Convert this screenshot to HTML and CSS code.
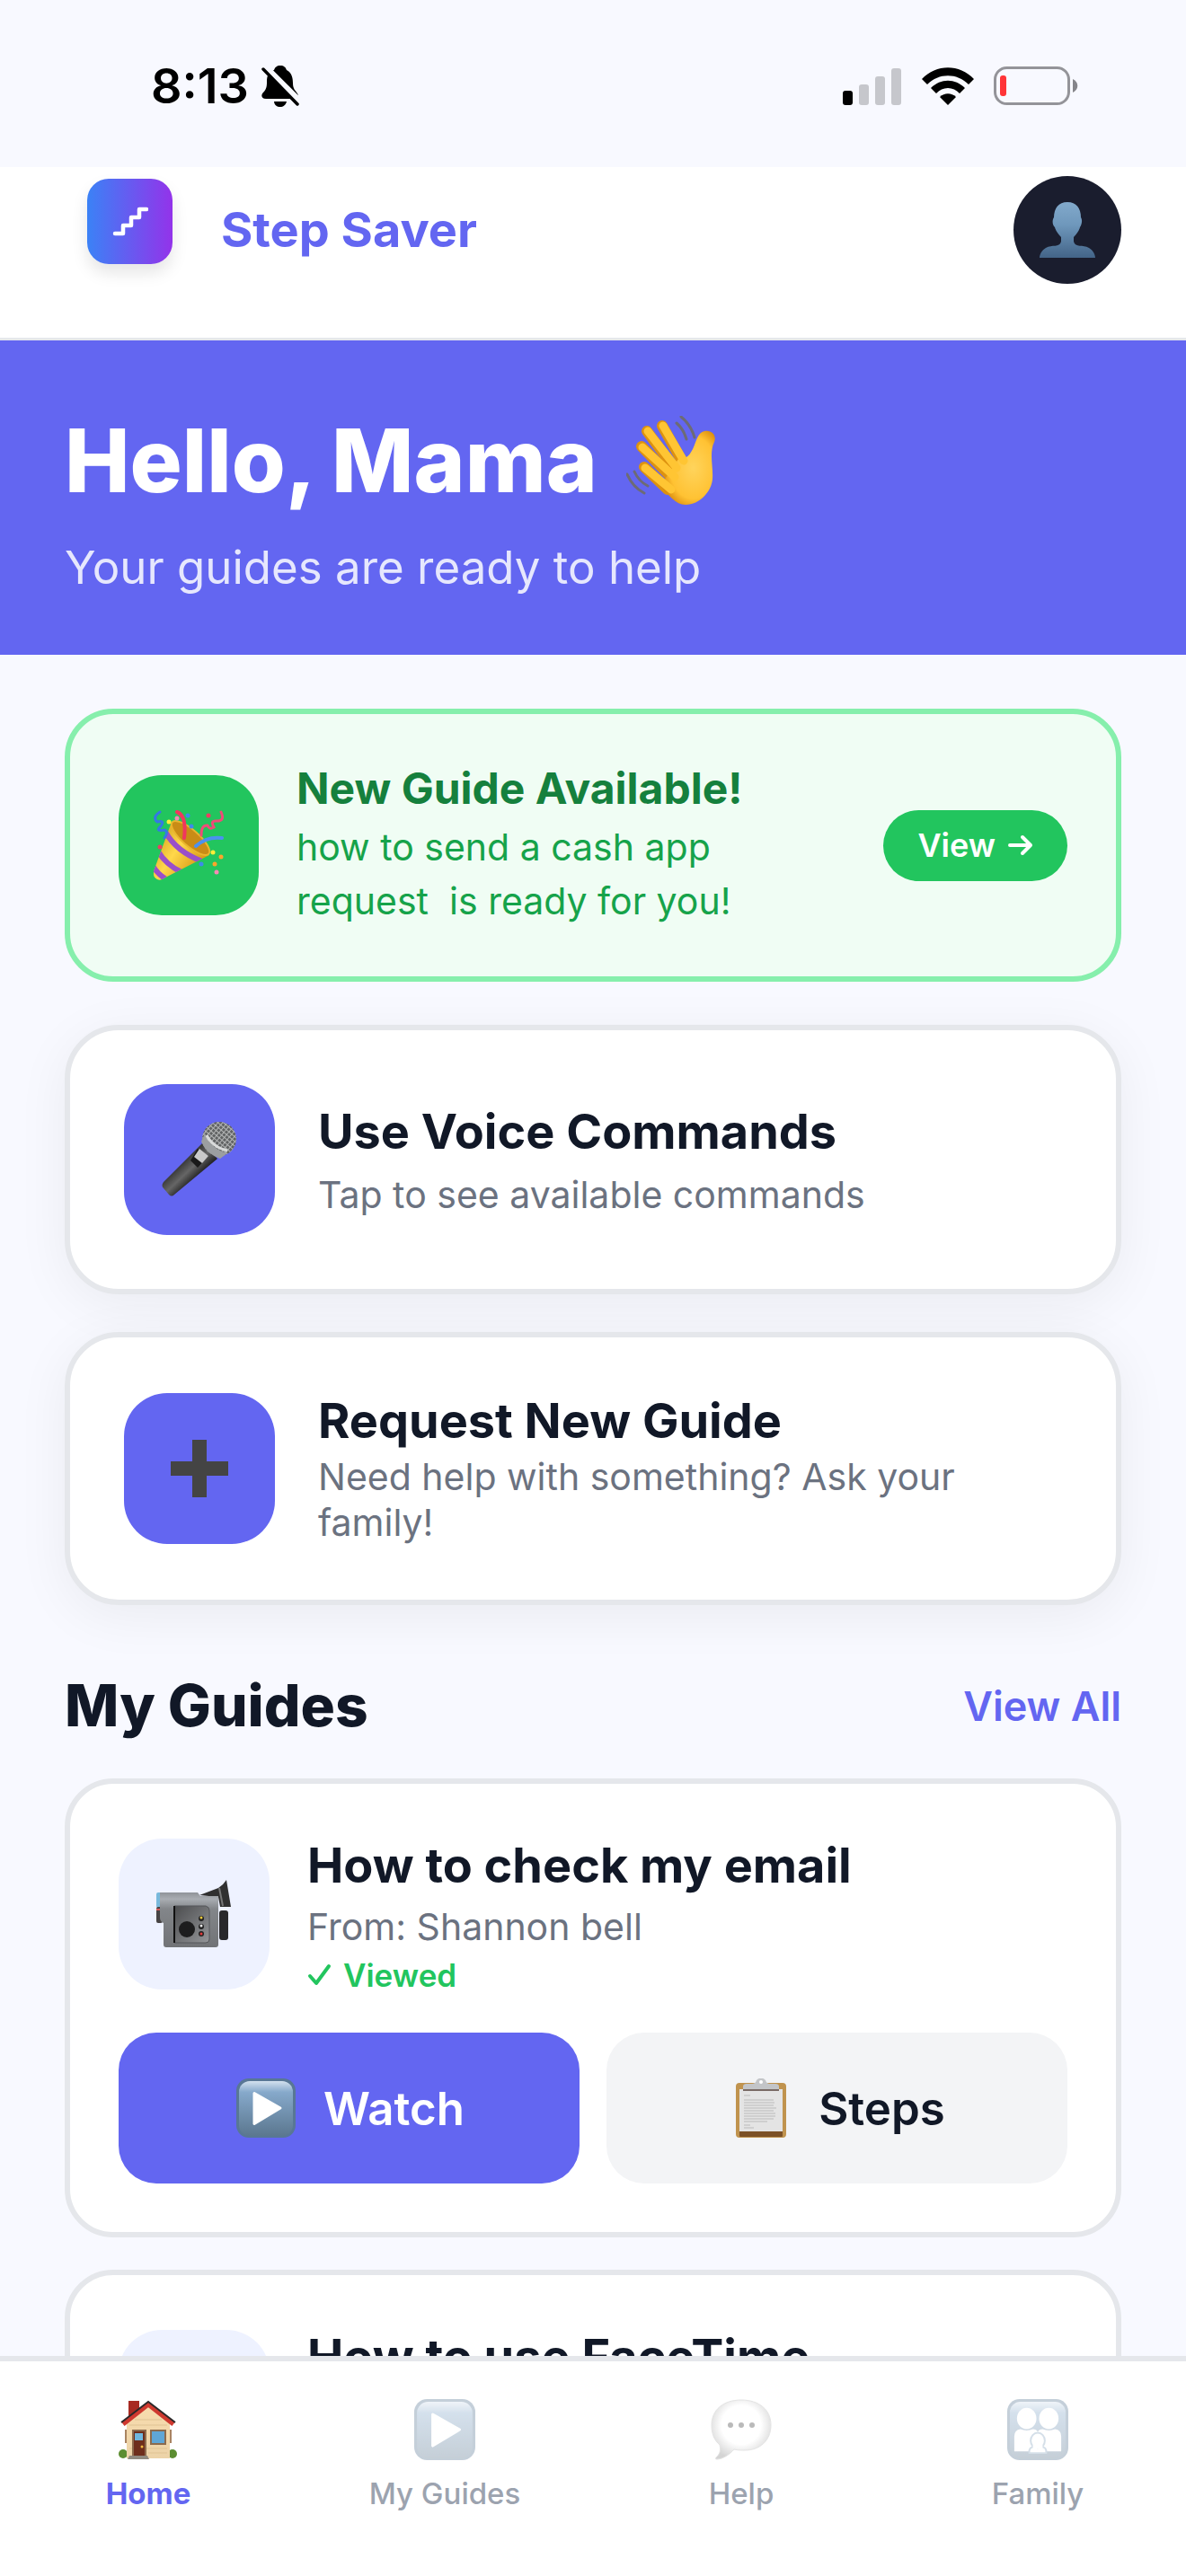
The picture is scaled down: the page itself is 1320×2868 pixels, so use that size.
FILE: index.html
```html
<!DOCTYPE html>
<html lang="en">
<head>
  <meta charset="UTF-8">
  <meta name="viewport" content="width=device-width, initial-scale=1.0">
  <title>Step Saver</title>
  <link rel="stylesheet" href="styles.css">
</head>
<body>
  <!-- shared icon, used on the Watch button and in the nav -->
  <svg class="defs" width="0" height="0" aria-hidden="true">
    <defs>
      <linearGradient id="tileBlue" x1="0" y1="0" x2="0" y2="1">
        <stop offset="0" stop-color="#d3e1ee"/>
        <stop offset=".2" stop-color="#86a9cb"/>
        <stop offset="1" stop-color="#5b778f"/>
      </linearGradient>
      <symbol id="playTile" viewBox="0 0 66 66">
        <rect width="66" height="66" rx="14" fill="#587795"/>
        <rect x="3" y="3" width="60" height="61" rx="12" fill="url(#tileBlue)"/>
        <path d="M20 16.500 L49 33 L20 50.500 Z" fill="#fff" stroke="#fff" stroke-width="3" stroke-linejoin="round"/>
      </symbol>
    </defs>
  </svg>

  <div class="app">
    <div class="status-bar">
      <div class="status-left">
        <span class="time">8:13</span>
        <svg width="42" height="46" viewBox="0 0 42 46">
          <path d="M21 0 C25 0 27 2 28 5 C34 8 35 14 35 20 C35 26 38 28 40 31 C42 35 40 37 37 37 H5 C0 37 -1 33 2 30 C6 26 6 22 6 18 C6 11 8 7 14 5 C15 2 17 0 21 0 Z"/>
          <path d="M14 40 H28 C27 44 24 46 21 46 C17 46 14.500 44 14 40 Z"/>
          <path d="M1 -1 L44 42" stroke="#f8f9ff" stroke-width="8"/>
          <path d="M2 4 L40 43" stroke="#000" stroke-width="3.500" stroke-linecap="round"/>
        </svg>
      </div>
      <div class="status-right">
        <svg width="66" height="42" viewBox="0 0 66 42">
          <rect x="0" y="26" width="11" height="16" rx="3" fill="#000"/>
          <rect x="18" y="19" width="11" height="23" rx="3" fill="#c6c7cc"/>
          <rect x="36" y="10" width="11" height="32" rx="3" fill="#c6c7cc"/>
          <rect x="54" y="1" width="11" height="41" rx="3" fill="#c6c7cc"/>
        </svg>
        <svg width="58" height="42" viewBox="0 0 58 42">
          <path d="M0 13 C16 -4 42 -4 58 13 L52 19 C39 6 19 6 6 19 Z"/>
          <path d="M10 23 C21 12 37 12 48 23 L42 29 C35 21 23 21 16 29 Z"/>
          <path d="M20 33 C25 28 33 28 38 33 L29 42 Z"/>
        </svg>
        <svg width="94" height="44" viewBox="0 0 94 44">
          <rect x="1.500" y="1.500" width="82" height="40" rx="13" fill="none" stroke="#949499" stroke-width="3"/>
          <path d="M88 14 C95 17 95 26 88 29 Z" fill="#85858a"/>
          <rect x="7" y="10" width="7" height="23" rx="3" fill="#ff3538"/>
        </svg>
      </div>
    </div>

    <header class="header">
      <a class="brand" href="#">
        <span class="logo">
          <svg width="40" height="34" viewBox="0 0 40 34">
            <path d="M3 31 H12 V22 H21 V13 H30 V4 H38" fill="none" stroke="#fff" stroke-width="4.500" stroke-linecap="round" stroke-linejoin="round"/>
          </svg>
        </span>
        <span class="brand-name">Step Saver</span>
      </a>
      <button type="button" class="avatar" aria-label="Profile">
        <svg width="62" height="62" viewBox="0 0 62 62">
          <defs>
            <linearGradient id="personBlue" x1="0" y1="0" x2="0" y2="1">
              <stop offset="0" stop-color="#82a9cb"/>
              <stop offset=".4" stop-color="#6f98bc"/>
              <stop offset="1" stop-color="#436488"/>
            </linearGradient>
          </defs>
          <path d="M31 0 C41 0 46 7 46 17 C48 20 47 25 45 28 C44 32 41 36 38 39 V44 C40 51 48 47 55 51 C60 54 62 59 62 62 H0 C0 59 2 54 7 51 C14 47 22 51 24 44 V39 C21 36 18 32 17 28 C14 25 14 20 16 17 C16 7 21 0 31 0 Z" fill="url(#personBlue)"/>
        </svg>
      </button>
    </header>

    <main class="content">
      <section class="hero">
        <h1>Hello, Mama
          <svg width="100" height="100" viewBox="0 0 100 100">
            <defs>
              <radialGradient id="skin" cx=".6" cy=".5" r=".6">
                <stop offset="0" stop-color="#ffd45c"/>
                <stop offset=".7" stop-color="#ffc233"/>
                <stop offset="1" stop-color="#d98a0b"/>
              </radialGradient>
            </defs>
            <g fill="none" stroke-linecap="round">
              <g stroke="#dd920f" stroke-width="12">
                <path d="M40 11 L62 50"/>
                <path d="M23 17 L52 56"/>
                <path d="M17 34 L48 66"/>
                <path d="M20 57 L46 82"/>
              </g>
              <path d="M58 48 C66 50 71 43 74 37 C78 29 79 19 87 17 C95 15 101 22 98 29 C92 41 97 57 96 70 C95 84 82 99 66 99 C55 99 47 88 38 78 Z" fill="url(#skin)"/>
              <g stroke="#ffc533" stroke-width="9">
                <path d="M41 11 L64 50"/>
                <path d="M24 17 L56 58"/>
                <path d="M18 35 L54 68"/>
                <path d="M21 58 L50 82"/>
              </g>
              <g stroke="#6d6b75" stroke-width="3">
                <path d="M56 8 Q64 15 67 26"/>
                <path d="M61 1 Q72 10 76 24"/>
                <path d="M1 65 Q7 79 20 86"/>
                <path d="M9 62 Q14 73 24 78"/>
              </g>
            </g>
          </svg>
        </h1>
        <p>Your guides are ready to help</p>
      </section>

      <section class="page">
        <div class="card alert">
          <div class="tile tile-green">
            <svg width="78" height="78" viewBox="0 0 78 78">
              <defs>
                <linearGradient id="gold" x1="0" y1="0" x2="1" y2=".7">
                  <stop offset="0" stop-color="#c58a12"/>
                  <stop offset=".5" stop-color="#ffd84a"/>
                  <stop offset="1" stop-color="#d08b0a"/>
                </linearGradient>
                <clipPath id="cone"><path d="M20 13 L0 68 Q-1 75 4 77 Q8 79 13 75 L62 50 Z"/></clipPath>
              </defs>
              <path d="M20 13 L0 68 Q-1 75 4 77 Q8 79 13 75 L62 50 Z" fill="url(#gold)"/>
              <g clip-path="url(#cone)" stroke="#9a4fc9" stroke-width="6" fill="none">
                <path d="M13 24 Q25 46 54 57"/>
                <path d="M5 46 Q14 61 31 69"/>
                <path d="M-1 62 Q4 71 14 77"/>
              </g>
              <ellipse cx="41" cy="31" rx="27" ry="9" transform="rotate(41 41 31)" fill="#c98c16" stroke="#eab52c" stroke-width="2"/>
              <g fill="none" stroke-linecap="round" stroke-width="3">
                <path d="M7 2 Q-2 8 4 13 Q13 11 8 18 Q1 24 12 22 Q17 24 12 31" stroke="#3478e5"/>
                <path d="M26 2 Q37 6 34 31" stroke="#f0375e" stroke-width="4"/>
                <path d="M75 2 Q80 13 69 12 Q63 12 67 19 Q62 22 60 17 Q53 16 53 28" stroke="#ef4c78"/>
                <path d="M47 40 Q59 29 76 31" stroke="#4b91f0" stroke-width="4"/>
              </g>
              <g fill="#3d8bea"><circle cx="38" cy="6" r="2.500"/><circle cx="42" cy="18" r="2.500"/><circle cx="53" cy="60" r="2.500"/></g>
              <g fill="#ffed38"><circle cx="17" cy="13" r="2.500"/><circle cx="66" cy="47" r="2.500"/></g>
              <g fill="#ffa52b"><circle cx="75" cy="52" r="2.500"/><circle cx="68" cy="60" r="2.500"/></g>
              <g fill="#f58bb5"><circle cx="26" cy="9" r="2.500"/><circle cx="70" cy="69" r="2.500"/></g>
              <g fill="#ed3f62"><circle cx="61" cy="6" r="2.500"/><circle cx="7" cy="41" r="2.500"/></g>
            </svg>
          </div>
          <div class="alert-text">
            <h2>New Guide Available!</h2>
            <p>how to send a cash app request&nbsp; is ready for you!</p>
          </div>
          <button type="button" class="view-btn">View
            <svg width="28" height="24" viewBox="0 0 28 24">
              <path d="M2 12 H25 M16 3 L25 12 L16 21" fill="none" stroke="#fff" stroke-width="4" stroke-linecap="round" stroke-linejoin="round"/>
            </svg>
          </button>
        </div>

        <a class="card action voice" href="#">
          <div class="tile">
            <svg width="84" height="84" viewBox="0 0 84 84">
              <defs>
                <linearGradient id="micBody" x1="0" y1="0" x2="1" y2="1">
                  <stop offset=".3" stop-color="#222"/>
                  <stop offset=".5" stop-color="#666"/>
                  <stop offset=".65" stop-color="#1d1d1d"/>
                </linearGradient>
                <pattern id="mesh" width="4" height="4" patternUnits="userSpaceOnUse" patternTransform="rotate(40)">
                  <rect width="4" height="4" fill="#b4b6b6"/>
                  <rect x="1" y="1" width="3" height="3" fill="#606263"/>
                </pattern>
              </defs>
              <path d="M45 24 L62 41 L14 81 Q11 84 8 81 L2 74 Q-1 71 2 67 Z" fill="url(#micBody)"/>
              <circle cx="64" cy="19" r="19" fill="url(#mesh)"/>
              <path d="M48 13 Q54 30 73 35 L65 41 Q49 35 44 22 Z" fill="#9b9ea0"/>
              <path d="M50 15 Q56 28 73 32" fill="none" stroke="#d9dbdb" stroke-width="3"/>
              <path d="M40 30 L52 38 L40 51 L32 43 Z" fill="#191919"/>
              <path d="M42 30 L52 38 L45 46 L36 39 Z" fill="#c9c9c9"/>
            </svg>
          </div>
          <div class="action-text">
            <h2>Use Voice Commands</h2>
            <p>Tap to see available commands</p>
          </div>
        </a>

        <a class="card action" href="#">
          <div class="tile">
            <svg width="64" height="64" viewBox="0 0 64 64">
              <path d="M24 0 H40 V24 H64 V40 H40 V64 H24 V40 H0 V24 H24 Z" fill="#444"/>
            </svg>
          </div>
          <div class="action-text">
            <h2>Request New Guide</h2>
            <p>Need help with something? Ask your family!</p>
          </div>
        </a>

        <div class="section-head">
          <h2>My Guides</h2>
          <a href="#">View All</a>
        </div>

        <div class="guide-list">
          <article class="card guide">
            <div class="guide-top">
              <div class="tile tile-light">
                <svg width="84" height="84" viewBox="0 0 84 84">
                  <defs>
                    <linearGradient id="camBody" x1="0" y1="0" x2="0" y2="1">
                      <stop offset="0" stop-color="#8f9398"/>
                      <stop offset=".12" stop-color="#a9adb2"/>
                      <stop offset=".3" stop-color="#83868a"/>
                      <stop offset="1" stop-color="#717376"/>
                    </linearGradient>
                    <linearGradient id="camPanel" x1="0" y1="0" x2="1" y2="1">
                      <stop offset="0" stop-color="#4b4c4e"/>
                      <stop offset="1" stop-color="#949699"/>
                    </linearGradient>
                  </defs>
                  <rect x="70" y="38" width="10" height="33" rx="3" fill="#29292a"/>
                  <path d="M48 21 L69 13 Q75 9 78 4 L83 34 L71 34 L69 23 Z" fill="#303030"/>
                  <path d="M70 13 L74 33" stroke="#777" stroke-width="2"/>
                  <rect x="0" y="18" width="7" height="17" rx="2" fill="#78b9dc"/>
                  <rect x="0" y="34" width="7" height="18" rx="2" fill="#474444"/>
                  <path d="M0 37 H5" stroke="#d65a5a" stroke-width="2"/>
                  <path d="M4 18 H46 L49 22 H69 V76 Q69 79 66 79 H11 Q8 79 8 76 V52 Q4 50 4 46 Z" fill="url(#camBody)"/>
                  <path d="M20 33 H55 Q59 34 59 38 V70 Q59 74 55 74 H20 Z" fill="url(#camPanel)" stroke="#55575a" stroke-width="1"/>
                  <path d="M20 33 V74" stroke="#111" stroke-width="2"/>
                  <circle cx="34" cy="59" r="9" fill="#1d1d1e"/>
                  <circle cx="50" cy="47" r="3" fill="#222"/><circle cx="50" cy="46" r="1.500" fill="#f0cb3d"/>
                  <circle cx="50" cy="56" r="3" fill="#222"/><circle cx="50" cy="55" r="1.500" fill="#eee"/>
                  <circle cx="50" cy="64" r="3" fill="#222"/><circle cx="50" cy="64" r="1.500" fill="#e43b3b"/>
                </svg>
              </div>
              <div class="guide-info">
                <h3>How to check my email</h3>
                <p class="from">From: Shannon bell</p>
                <p class="viewed">
                  <svg width="28" height="26" viewBox="0 0 28 26">
                    <path d="M3 14 L10 22 L24 3" fill="none" stroke="#22c55e" stroke-width="4" stroke-linecap="round" stroke-linejoin="round"/>
                  </svg>
                  Viewed
                </p>
              </div>
            </div>
            <div class="guide-actions">
              <button type="button" class="btn btn-primary">
                <svg width="72" height="66"><use href="#playTile" x="3" width="66" height="66"/></svg>
                Watch
              </button>
              <button type="button" class="btn btn-light">
                <svg width="72" height="66" viewBox="-8 0 72 66">
                  <rect y="5" width="56" height="61" rx="4" fill="#c0934e"/>
                  <rect x="4" y="56" width="48" height="9" rx="1" fill="#7c5127"/>
                  <rect x="4" y="12" width="48" height="47" fill="#e4e4e4"/>
                  <path d="M8 14 V9 Q8 6 12 6 H18 Q22 6 23 2 Q28 -3 33 2 Q34 6 38 6 H44 Q48 6 48 9 V14 Z" fill="#c3c5c8"/>
                  <path d="M8 13 H48" stroke="#796a65" stroke-width="2"/>
                  <circle cx="28" cy="4" r="2" fill="#fff"/>
                  <path d="M9 19 H16 M9 24 H42 M9 27 H43 M9 30 H42 M9 33 H45 M9 36 H42 M9 39 H44 M9 42 H44 M9 45 H42 M9 48 H35 M9 52 H16 M9 55 H20" stroke="#c8c8c8" stroke-width="1.500"/>
                </svg>
                Steps
              </button>
            </div>
          </article>

          <article class="card guide">
            <div class="guide-top">
              <div class="tile tile-light"></div>
              <div class="guide-info">
                <h3>How to use FaceTime</h3>
              </div>
            </div>
          </article>
        </div>
      </section>
    </main>

    <nav class="bottom-nav">
      <a class="active" href="#">
        <svg width="66" height="68" viewBox="0 0 66 68">
          <defs>
            <linearGradient id="wall" x1="0" y1="0" x2="0" y2="1">
              <stop offset="0" stop-color="#f8dcae"/>
              <stop offset="1" stop-color="#ecd3a8"/>
            </linearGradient>
          </defs>
          <rect x="11" y="2" width="12" height="20" fill="#a72a22"/>
          <circle cx="5" cy="61" r="5" fill="#5c8d31"/><circle cx="60" cy="61" r="5" fill="#5c8d31"/>
          <path d="M7 34 H9 V49 H7 Z M57 34 H59 V49 H57 Z" fill="#a98462"/>
          <path d="M9 66 V25 L33 6 L57 25 V66 Z" fill="url(#wall)"/>
          <path d="M12 29 H54 M12 55 H54 M33 60 H54 M18 23 H48" stroke="#dfc394" stroke-width="1"/>
          <path d="M5 28 L33 6 L61 28" fill="none" stroke="#cf392f" stroke-width="5"/>
          <path d="M3 26 L33 3 L63 26" fill="none" stroke="#2b2829" stroke-width="2"/>
          <rect x="15" y="34" width="16" height="29" fill="#8c6b4d"/>
          <rect x="17" y="36" width="12" height="27" fill="#6e2e1c"/>
          <rect x="18" y="38" width="9" height="8" fill="#6fb7de"/>
          <circle cx="26" cy="53" r="1.500" fill="#f2bc42"/>
          <rect x="35" y="34" width="18" height="17" fill="#8c6b4d"/>
          <rect x="37" y="36" width="14" height="13" fill="#5fa6d6"/>
          <path d="M12 63 H32 L34 67 H10 Z" fill="#908a80"/>
        </svg>
        <span>Home</span>
      </a>
      <a href="#">
        <svg width="68" height="68"><use href="#playTile" width="68" height="68"/></svg>
        <span>My Guides</span>
      </a>
      <a href="#" class="help">
        <svg width="68" height="68" viewBox="0 0 68 68">
          <defs>
            <radialGradient id="bubble" cx=".5" cy=".42" r=".6">
              <stop offset=".55" stop-color="#fff"/>
              <stop offset="1" stop-color="#d4d4d4"/>
            </radialGradient>
          </defs>
          <path d="M34 1 C54 1 67 12 67 29 C67 47 54 57 38 57 C34 57 30 57 26 56 C21 62 13 67 7 67 C5 67 5 66 7 64 C11 60 11 56 10 51 C4 46 1 39 1 29 C1 12 14 1 34 1 Z" fill="url(#bubble)" stroke="#e4e4e4" stroke-width="1"/>
          <circle cx="22" cy="29" r="3" fill="#bababa"/><circle cx="34" cy="29" r="3" fill="#bababa"/><circle cx="46" cy="29" r="3" fill="#bababa"/>
        </svg>
        <span>Help</span>
      </a>
      <a href="#">
        <svg width="68" height="68" viewBox="0 0 69 69">
          <rect width="69" height="69" rx="14" fill="#587795"/>
          <rect x="3" y="3" width="63" height="64" rx="12" fill="url(#tileBlue)"/>
          <g fill="#fff">
            <ellipse cx="22" cy="22" rx="11" ry="12"/>
            <ellipse cx="47" cy="22" rx="11" ry="12"/>
            <path d="M8 59 V42 Q8 35 15 34 Q22 37 29 34 Q33 34 34.500 37 Q36 34 40 34 Q47 37 54 34 Q61 35 61 42 V59 Z"/>
            <ellipse cx="34.500" cy="47" rx="8" ry="9" stroke="#86a5c0" stroke-width="2"/>
            <path d="M25 61 Q24 54 31 54 Q34 56 38 54 Q45 54 44 61 Z" stroke="#86a5c0" stroke-width="2"/>
            <path d="M29 52 H40 V56 H29 Z"/>
          </g>
        </svg>
        <span>Family</span>
      </a>
    </nav>
  </div>
</body>
</html>
```

FILE: styles.css
```css
* {
  box-sizing: border-box;
}
body {
  margin: 0;
  font-family: Inter, "Liberation Sans", sans-serif;
  background: #f8f9ff;
  color: #111827;
}
h1, h2, h3, p {
  margin: 0;
}
a {
  color: inherit;
  text-decoration: none;
}
button {
  border: none;
  padding: 0;
  font-family: inherit;
  cursor: pointer;
}
svg {
  display: block;
  flex-shrink: 0;
}
.defs {
  position: absolute;
}
.app {
  display: flex;
  flex-direction: column;
  height: 100vh;
}

/* status bar */
.status-bar {
  display: flex;
  justify-content: space-between;
  padding: 72px 120px 66px 168px;
}
.status-left, .status-right {
  display: flex;
  align-items: center;
  height: 48px;
}
.status-left {
  gap: 14px;
}
.status-right {
  gap: 22px;
}
.time {
  font-size: 54px;
  font-weight: 600;
  line-height: 48px;
  color: #000;
}

/* header */
.header {
  display: flex;
  justify-content: space-between;
  align-items: center;
  padding: 10px 72px 60px;
  background: #fff;
  border-bottom: 3px solid #e5e7eb;
}
.brand {
  display: flex;
  align-items: center;
}
.logo {
  display: flex;
  align-items: center;
  justify-content: center;
  width: 95px;
  height: 95px;
  margin: 0 54px 20px 25px;
  border-radius: 24px;
  background: linear-gradient(90deg, #3b82f6, #9333ea);
  box-shadow: 0 10px 18px rgba(0,0,0,0.1);
}
.brand-name {
  font-size: 54px;
  font-weight: 700;
  line-height: 66px;
  color: #6366f1;
}
.avatar {
  display: flex;
  align-items: center;
  justify-content: center;
  width: 120px;
  height: 120px;
  border-radius: 50%;
  background: #1a1d2e;
}

/* scrolling content */
.content {
  flex: 1;
  min-height: 0;
  overflow-y: auto;
  scrollbar-width: none;
}
.hero {
  padding: 72px 72px 64px;
  background: #6366f1;
  color: #fff;
}
.hero h1 {
  display: flex;
  align-items: center;
  gap: 32px;
  font-size: 97px;
  font-weight: 800;
  line-height: 124px;
}
.hero p {
  margin-top: 24px;
  font-size: 51px;
  line-height: 66px;
  color: #e6e7fd;
}
.page {
  padding: 60px 72px;
}
.card {
  background: #fff;
  border: 6px solid #e5e7eb;
  border-radius: 54px;
}
.tile {
  display: flex;
  align-items: center;
  justify-content: center;
  flex-shrink: 0;
  width: 168px;
  height: 168px;
  border-radius: 48px;
  background: #6366f1;
}
.tile-green {
  width: 156px;
  height: 156px;
  background: #22c55e;
}
.tile-light {
  background: #eef2ff;
}

/* new guide alert */
.alert {
  display: flex;
  align-items: center;
  gap: 42px;
  padding: 54px;
  margin-bottom: 48px;
  background: #f0fdf4;
  border-color: #86efac;
}
.alert-text {
  flex: 1;
}
.alert-text h2 {
  margin-bottom: 6px;
  font-size: 48px;
  font-weight: 700;
  line-height: 58px;
  color: #15803d;
}
.alert-text p {
  font-size: 41px;
  line-height: 60px;
  color: #16a34a;
}
.view-btn {
  display: flex;
  align-items: center;
  gap: 14px;
  height: 79px;
  padding: 0 38px;
  border-radius: 40px;
  background: #22c55e;
  color: #fff;
  font-size: 36px;
  font-weight: 600;
}

/* action cards */
.action {
  display: flex;
  align-items: center;
  gap: 48px;
  padding: 60px;
  border-radius: 60px;
  box-shadow: 0 12px 60px rgba(0,0,0,0.06);
}
.action + .action {
  margin-top: 42px;
}
.action-text {
  flex: 1;
}
.action h2, .guide h3 {
  font-size: 54px;
  font-weight: 700;
  line-height: 66px;
}
.action p {
  margin-top: 4px;
  font-size: 41px;
  line-height: 51px;
  color: #6b7280;
}
.voice p {
  margin-top: 12px;
}

/* guides */
.section-head {
  display: flex;
  justify-content: space-between;
  align-items: center;
  margin: 73px 0 42px;
}
.section-head h2 {
  font-size: 64px;
  font-weight: 800;
  line-height: 78px;
}
.section-head a {
  font-size: 45px;
  font-weight: 600;
  color: #6366f1;
}
.guide-list {
  display: flex;
  flex-direction: column;
  gap: 36px;
}
.guide {
  padding: 54px;
}
.guide-top {
  display: flex;
  align-items: center;
  gap: 42px;
  min-height: 182px;
}
.guide-info {
  flex: 1;
  align-self: flex-start;
}
.guide h3 {
  line-height: 74px;
}
.from {
  font-size: 41px;
  line-height: 62px;
  color: #6b7280;
}
.viewed {
  display: flex;
  align-items: center;
  gap: 12px;
  font-size: 35px;
  font-weight: 600;
  line-height: 46px;
  color: #22c55e;
}
.guide-actions {
  display: grid;
  grid-template-columns: 1fr 1fr;
  gap: 30px;
  margin-top: 41px;
}
.btn {
  display: flex;
  align-items: center;
  justify-content: center;
  gap: 28px;
  height: 168px;
  border-radius: 42px;
  font-size: 51px;
  font-weight: 600;
}
.btn-primary {
  background: #6366f1;
  color: #fff;
}
.btn-light {
  background: #f3f4f6;
  color: #111827;
}

/* bottom nav */
.bottom-nav {
  display: grid;
  grid-template-columns: repeat(4, 1fr);
  padding: 42px 0 71px;
  background: #fff;
  border-top: 6px solid #e5e7eb;
}
.bottom-nav a {
  display: flex;
  flex-direction: column;
  align-items: center;
  gap: 16px;
  font-size: 33px;
  font-weight: 500;
  line-height: 42px;
  color: #9ca3af;
}
.bottom-nav svg {
  opacity: 0.35;
}
.bottom-nav .active {
  font-weight: 700;
  color: #6366f1;
}
.bottom-nav .active svg, .bottom-nav .help svg {
  opacity: 1;
}
```
